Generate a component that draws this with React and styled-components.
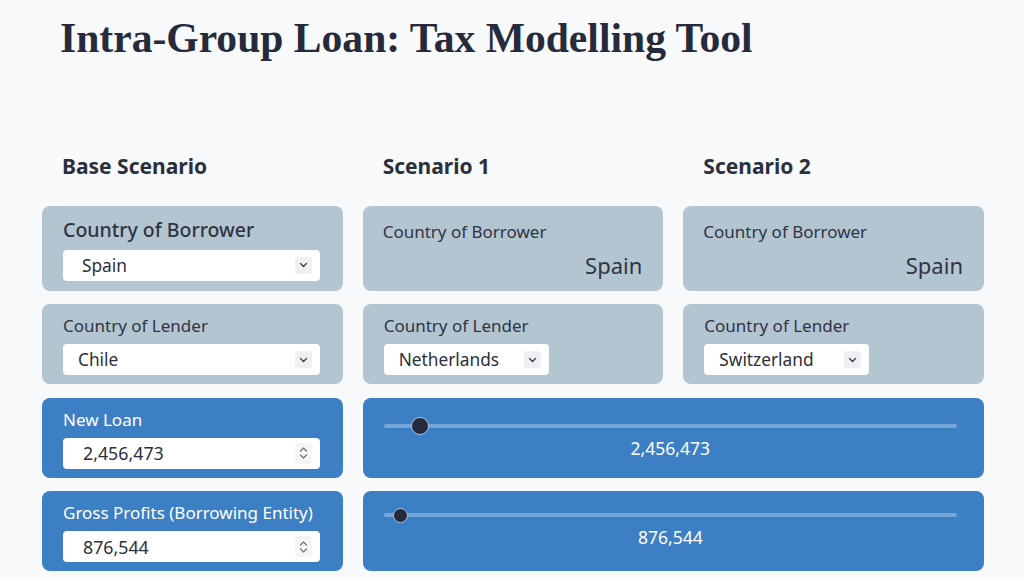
import React, { useState } from 'react';
import styled, { createGlobalStyle } from 'styled-components';

const GlobalStyle = createGlobalStyle`
  * { box-sizing: border-box; }
  body {
    margin: 0;
    background: #f8f9fa;
    font-family: "Noto Sans", "Open Sans", sans-serif;
    color: #2b2f3d;
  }
`;

const Page = styled.div`
  padding: 12px 40px 0 42px;
`;

const Title = styled.h1`
  margin: 0 0 0 18px;
  font-family: "Liberation Serif", "DejaVu Serif", serif;
  font-weight: 700;
  font-size: 41.6px;
  line-height: 52px;
  color: #262a3b;
`;

const Grid = styled.div`
  margin-top: 88px;
  width: 942px;
  display: grid;
  grid-template-columns: repeat(3, 1fr);
  column-gap: 20px;
  row-gap: 13.5px;
`;

const Heading = styled.h2`
  margin: 0 0 12px 20px;
  font-size: 21px;
  font-weight: 700;
  line-height: 28px;
  color: #2b2f3d;
`;

const Card = styled.div`
  border-radius: 8px;
  background: ${p => (p.$blue ? '#3d7fc4' : '#b4c5d2')};
  color: ${p => (p.$blue ? '#ffffff' : '#2f3442')};
  padding: ${p => p.$pad || '10px 21px 9px'};
  height: ${p => p.$h || 80}px;
  grid-column: ${p => (p.$span ? `span ${p.$span}` : 'auto')};
  display: flex;
  flex-direction: column;
`;

const Label = styled.div`
  font-size: ${p => (p.$big ? 19.5 : 17)}px;
  line-height: ${p => (p.$big ? 26 : 24)}px;
  font-weight: ${p => (p.$big ? 500 : 400)};
  margin-bottom: ${p => (p.$big ? 7 : 6)}px;
  white-space: nowrap;
`;

const Value = styled.div`
  font-size: 22px;
  line-height: 30px;
  text-align: right;
  margin-top: 0;
`;

const Field = styled.div`
  position: relative;
  width: ${p => p.$w || 257}px;
  height: 31px;
  flex: none;
  background: #fff;
  border-radius: 4px;
`;

const Select = styled.select`
  appearance: none;
  width: 100%;
  height: 100%;
  border: none;
  background: transparent;
  font-family: inherit;
  font-size: 17.3px;
  color: #2b2f3d;
  padding: 0 34px 0 ${p => p.$indent || 15}px;
  outline: none;
`;

const NumInput = styled.input`
  width: 100%;
  height: 100%;
  border: none;
  background: transparent;
  font-family: inherit;
  font-size: 17.8px;
  color: #2b2f3d;
  padding: 0 34px 0 20px;
  outline: none;
`;

const IconBox = styled.span`
  position: absolute;
  right: 8px;
  top: ${p => (p.$tall ? 5 : 7)}px;
  width: 17px;
  height: ${p => (p.$tall ? 21 : 17)}px;
  border-radius: 3px;
  background: ${p => (p.$tall ? '#f4f5f6' : '#eff0f1')};
  display: flex;
  align-items: center;
  justify-content: center;
  pointer-events: none;
  svg { display: block; }
`;

const SliderWrap = styled.div`
  display: flex;
  flex-direction: column;
  align-items: stretch;
`;

const Range = styled.input`
  appearance: none;
  -webkit-appearance: none;
  width: 100%;
  height: 18px;
  margin: 0;
  background: transparent;
  outline: none;
  &::-webkit-slider-runnable-track {
    height: 4px;
    border-radius: 2px;
    background: #76a5d9;
  }
  &::-webkit-slider-thumb {
    -webkit-appearance: none;
    width: ${p => p.$thumb}px;
    height: ${p => p.$thumb}px;
    margin-top: ${p => 2 - p.$thumb / 2}px;
    border-radius: 50%;
    background: #252a3c;
    border: 1.5px solid #a9c4e4;
  }
`;

const RangeValue = styled.div`
  text-align: center;
  font-size: 17.5px;
  line-height: 24px;
  margin-top: 1px;
`;

const Chevron = () => (
  <svg width="9" height="6" viewBox="0 0 9 6">
    <path d="M1.5 1.5 L4.5 4.5 L7.5 1.5" fill="none" stroke="#3a3f4c" strokeWidth="1.3" strokeLinecap="round" />
  </svg>
);

const Spinner = () => (
  <svg width="9" height="16" viewBox="0 0 9 16">
    <path d="M1.5 6 L4.5 3 L7.5 6" fill="none" stroke="#6b6f78" strokeWidth="1.2" strokeLinecap="round" />
    <path d="M1.5 10 L4.5 13 L7.5 10" fill="none" stroke="#6b6f78" strokeWidth="1.2" strokeLinecap="round" />
  </svg>
);

const countries = ['Spain', 'Chile', 'Netherlands', 'Switzerland', 'Germany', 'France', 'United Kingdom'];

function CountrySelect({ value, onChange, width, indent }) {
  return (
    <Field $w={width}>
      <Select $indent={indent} value={value} onChange={e => onChange(e.target.value)}>
        {countries.map(c => <option key={c}>{c}</option>)}
      </Select>
      <IconBox><Chevron /></IconBox>
    </Field>
  );
}

function NumberField({ value, onChange }) {
  return (
    <Field>
      <NumInput value={value.toLocaleString('en-US')} onChange={e => onChange(+e.target.value.replace(/[^0-9]/g, ''))} />
      <IconBox $tall><Spinner /></IconBox>
    </Field>
  );
}

function SliderCard({ value, max, onChange, thumb, top }) {
  return (
    <Card $blue $span={2} $pad={`${top}px 27px 10px 21px`}>
      <SliderWrap>
        <Range $thumb={thumb} type="range" min={0} max={max} value={value} onChange={e => onChange(+e.target.value)} />
        <RangeValue>{value.toLocaleString('en-US')}</RangeValue>
      </SliderWrap>
    </Card>
  );
}

export default function App() {
  const [borrower, setBorrower] = useState('Spain');
  const [lender, setLender] = useState('Chile');
  const [lender1, setLender1] = useState('Netherlands');
  const [lender2, setLender2] = useState('Switzerland');
  const [loan, setLoan] = useState(2456473);
  const [profits, setProfits] = useState(876544);

  return (
    <>
      <GlobalStyle />
      <Page>
        <Title>Intra-Group Loan: Tax Modelling Tool</Title>
        <Grid>
          <Heading>Base Scenario</Heading>
          <Heading>Scenario 1</Heading>
          <Heading>Scenario 2</Heading>

          <Card $h={85} $pad="11px 21px 10px">
            <Label $big>Country of Borrower</Label>
            <CountrySelect value={borrower} onChange={setBorrower} indent={19} />
          </Card>
          <Card $h={85} $pad="14px 21px 10px 20px">
            <Label>Country of Borrower</Label>
            <Value>{borrower}</Value>
          </Card>
          <Card $h={85} $pad="14px 21px 10px 20px">
            <Label>Country of Borrower</Label>
            <Value>{borrower}</Value>
          </Card>

          <Card>
            <Label>Country of Lender</Label>
            <CountrySelect value={lender} onChange={setLender} />
          </Card>
          <Card>
            <Label>Country of Lender</Label>
            <CountrySelect value={lender1} onChange={setLender1} width={165} />
          </Card>
          <Card>
            <Label>Country of Lender</Label>
            <CountrySelect value={lender2} onChange={setLender2} width={165} />
          </Card>

          <Card $blue>
            <Label>New Loan</Label>
            <NumberField value={loan} onChange={setLoan} />
          </Card>
          <SliderCard value={loan} max={50000000} onChange={setLoan} thumb={18} top={19} />

          <Card $blue>
            <Label>Gross Profits (Borrowing Entity)</Label>
            <NumberField value={profits} onChange={setProfits} />
          </Card>
          <SliderCard value={profits} max={50000000} onChange={setProfits} thumb={15} top={15} />
        </Grid>
      </Page>
    </>
  );
}
